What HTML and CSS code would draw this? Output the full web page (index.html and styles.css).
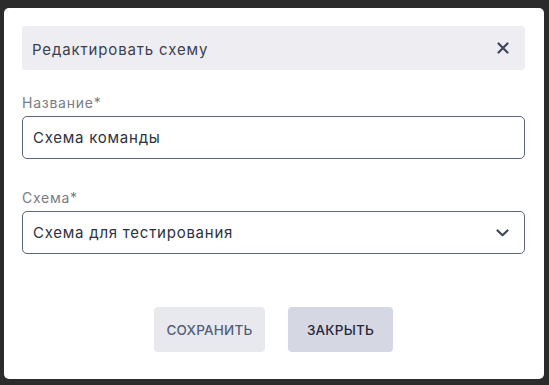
FILE: index.html
```html
<!DOCTYPE html>
<html lang="ru">
<head>
<meta charset="utf-8">
<link rel="stylesheet" href="styles.css">
</head>
<body>
<div class="backdrop">
  <div class="modal">
    <div class="modal-header">
      <span class="modal-title">Редактировать схему</span>
      <svg class="close" width="12" height="12" viewBox="0 0 12 12"><path d="M1.5 1.5L10.5 10.5M10.5 1.5L1.5 10.5" stroke="#3f4560" stroke-width="2.2" stroke-linecap="round"/></svg>
    </div>
    <div class="field field-first">
      <label class="label">Название*</label>
      <div class="input">Схема команды</div>
    </div>
    <div class="field">
      <label class="label">Схема*</label>
      <div class="input select">
        <span>Схема для тестирования</span>
        <svg width="13" height="8" viewBox="0 0 13 8"><path d="M1.5 1.5L6.5 6.2L11.5 1.5" fill="none" stroke="#3f4560" stroke-width="2.2" stroke-linecap="round" stroke-linejoin="round"/></svg>
      </div>
    </div>
    <div class="actions">
      <button class="btn btn-save">СОХРАНИТЬ</button>
      <button class="btn btn-close">ЗАКРЫТЬ</button>
    </div>
  </div>
</div>
</body>
</html>
```
FILE: styles.css
```css
html, body {
  margin: 0;
  padding: 0;
  background: #2b2b2b;
  font-family: Inter, "Noto Sans", sans-serif;
}
.backdrop {
  width: 549px;
  height: 385px;
  padding: 8px 5px 6px 4px;
  box-sizing: border-box;
}
.modal {
  background: #fff;
  border-radius: 5px;
  height: 371px;
  padding: 18px 19px 0 18px;
  box-sizing: border-box;
}
.modal-header {
  height: 44px;
  background: #eeeef2;
  border-radius: 4px;
  display: flex;
  align-items: center;
  justify-content: space-between;
  padding: 0 16px 0 10px;
}
.modal-title {
  font-size: 15px;
  color: #3c3f4f;
  letter-spacing: 0.85px;
  padding-top: 2px;
}
.close { display: block; }
.field {
  margin-top: 30px;
}
.field-first { margin-top: 24px; }
.label {
  display: block;
  font-size: 14px;
  color: #7a7c84;
  line-height: 17px;
  letter-spacing: 0.75px;
  margin-bottom: 5px;
}
.input {
  height: 43px;
  border: 1px solid #5d6480;
  border-radius: 5px;
  box-sizing: border-box;
  padding: 0 10px;
  display: flex;
  align-items: center;
  font-size: 15px;
  color: #2e3140;
  letter-spacing: 0.75px;
}
.select {
  justify-content: space-between;
  padding-right: 15px;
}
.actions {
  display: flex;
  justify-content: center;
  gap: 23px;
  margin-top: 53px;
}
.btn {
  height: 45px;
  border: none;
  border-radius: 4px;
  font-family: inherit;
  font-size: 13.5px;
  font-weight: 500;
  letter-spacing: 0.2px;
  padding: 0;
}
.btn-save {
  width: 111px;
  background: #e8e9ee;
  color: #565d7a;
}
.btn-close {
  width: 105px;
  background: #d5d7e2;
  color: #26283a;
}
```
